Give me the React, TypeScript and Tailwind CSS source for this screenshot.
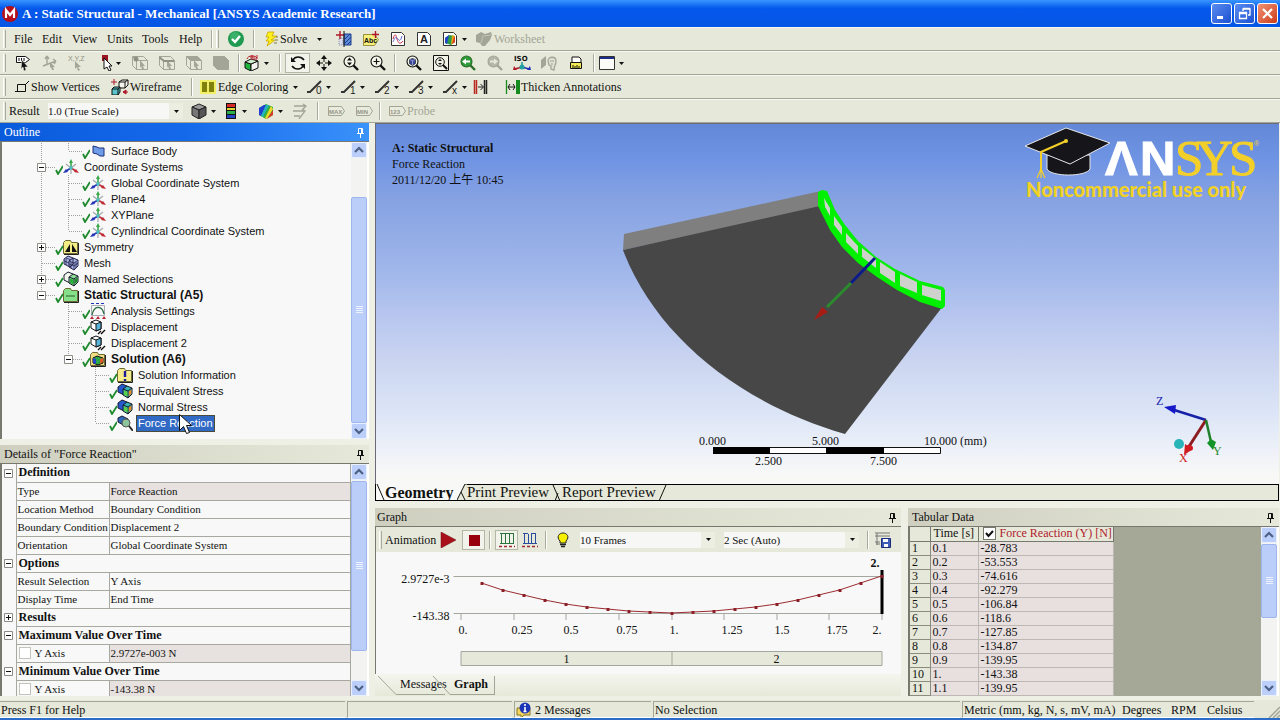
import React from 'react';
import clsx from 'clsx';

type Kids = { children?: React.ReactNode };

const Icon: React.FC<Kids & { w?: number; h?: number }> = ({ w = 16, h = 16, children }) => (
  <svg width={w} height={h} viewBox={`0 0 ${w} ${h}`} fill="none" className="shrink-0" aria-hidden="true">
    {children}
  </svg>
);

/* ---------- toolbar glyphs ---------- */

const CheckBall = () => (
  <Icon>
    <circle cx="8" cy="8" r="8" fill="#1f9a50" />
    <circle cx="7" cy="6" r="5" fill="#4fbf7c" opacity=".6" />
    <path d="M4 8l3 3 5-6" stroke="#fff" strokeWidth="2.4" />
  </Icon>
);
const Bolt = () => (
  <Icon w={14}>
    <path d="M3 1h6L7 5h5L6 9h4L2 15l2-5H1l3-4H1z" fill="#fff21c" stroke="#c9a500" strokeWidth=".8" />
    <path d="M9 12h3M10 9h3M11 6h2" stroke="#7c7a40" />
  </Icon>
);
const SectionPlane = () => (
  <Icon>
    <path d="M8 3h7v11H8z" fill="#5d8bd8" stroke="#1c3c8c" />
    <path d="M9 8l5-5M9 12l6-6M11 14l4-4" stroke="#1c3c8c" />
    <path d="M3 7h4v7H3z" fill="#d8dcea" stroke="#8890b0" strokeDasharray="1 1" />
    <path d="M0 4h8M4 0v8" stroke="#b01828" strokeWidth="1.4" />
    <path d="M8 0v16" stroke="#111" />
  </Icon>
);
const AbcNote = () => (
  <Icon>
    <path d="M.5 3.500h11l4 5-4 6H.5z" fill="#f6f07a" stroke="#98923c" />
    <text x="1" y="12" fontSize="7" fontWeight="bold" fontFamily="Liberation Sans, sans-serif" fill="#111">Abc</text>
    <path d="M12.500 0v7M9 3.500h7" stroke="#b01828" strokeWidth="1.4" />
  </Icon>
);
const ChartPage = () => (
  <Icon>
    <path d="M1.500 1.500h10l3 3v10h-13z" fill="#fff" stroke="#333" />
    <path d="M3 8c2-7 3-4 4 0s3 6 6 2" stroke="#cc3344" />
    <path d="M3 11c1-2 2-6 4-4s3 5 5-2" stroke="#5566cc" />
  </Icon>
);
const LetterPage = () => (
  <Icon>
    <path d="M1.500 1.500h10l3 3v10h-13z" fill="#fff" stroke="#333" />
    <text x="4" y="12" fontSize="11" fontWeight="bold" fontFamily="Liberation Sans, sans-serif" fill="#222">A</text>
  </Icon>
);
const ImagePage = () => (
  <Icon>
    <path d="M1.500 1.500h10l3 3v10h-13z" fill="#fff" stroke="#333" />
    <path d="M3 7l4-3 6 1v6l-4 3-6-2z" fill="#2a9c48" />
    <path d="M3 7l4-3-2 9-2-1z" fill="#2346c8" />
    <path d="M10 4l3 1v6l-4 3z" fill="#e3a51c" />
    <path d="M12 6l1 0v5l-3 2z" fill="#d8401c" />
  </Icon>
);
const Sheet = () => (
  <Icon>
    <path d="M0 4l5-3 4 2 6-2 1 3-2 5-5 6H6l-2-3-4-1z" fill="#a3a597" />
    <path d="M5 12l2-7 8-1" stroke="#c2c4b6" />
  </Icon>
);
const LabelPick = () => (
  <Icon>
    <path d="M1.500 1.500h9l4 3-4 3h-9z" fill="#fff" stroke="#111" />
    <path d="M4 3v3M6.500 3v3M9 3v3" stroke="#111" />
    <path d="M7 5l6 7-3 0 1 3-2 1-1-4-2 2z" fill="#111" stroke="#e6e9d9" strokeWidth=".5" />
  </Icon>
);
const DirPick = () => (
  <Icon>
    <path d="M1 11l13-5M5 1v8M5 1L3 4M5 1l2 3M14 6l-3-2M14 6l-2 3" stroke="#a3a597" strokeWidth="1.400" />
    <path d="M8 7l5 5-2 0 1 3-2 0-1-3-1 1z" fill="#a3a597" />
  </Icon>
);
const XyzPick = () => (
  <Icon w={18}>
    <text x="0" y="6" fontSize="7" fontFamily="Liberation Sans, sans-serif" fill="#8f9184">X,Y,Z</text>
    <path d="M7 6l6 6-3 0 2 3-2 1-1-4-2 2z" fill="#a3a597" />
  </Icon>
);
const PickArrow = () => (
  <Icon w={14}>
    <path d="M1 0h6v6H1z" fill="#9b1620" />
    <path d="M3 3l8 8H8l2 4-2 1-2-4-3 2z" fill="#fff" stroke="#111" />
  </Icon>
);
const CubePick: React.FC<{ kind: 'vertex' | 'edge' | 'face' | 'body' }> = ({ kind }) => (
  <Icon>
    <path d="M.5 1.500h11l4 4v9h-11l-4-4z" fill={kind === 'body' ? '#a3a597' : 'none'} stroke="#a3a597" />
    {kind !== 'body' && (
      <>
        <path d="M.5 1.500l4 4v9M4.500 5.500h11" stroke="#a3a597" />
        <path d="M8 5l5 6-2 0 1 3-2 0-1-3-1 2z" fill="#a3a597" />
      </>
    )}
    {kind === 'vertex' && <circle cx="4" cy="4" r="2.500" fill="#8f9184" />}
    {kind === 'edge' && <path d="M0 2l5 4h10" stroke="#8f9184" strokeWidth="2" />}
    {kind === 'face' && <path d="M.5 1.500h11l4 4h-11z" fill="#a3a597" />}
  </Icon>
);
const GreenCube = () => (
  <Icon>
    <path d="M1 7l6 2v7l-6-3z" fill="#1fb43c" stroke="#111" />
    <path d="M7 9l7-3v7l-7 3z" fill="#f4f4ee" stroke="#111" />
    <path d="M1 7l6-3 7 2-7 3z" fill="#cfeccc" stroke="#111" />
    <path d="M3 4c1-4 8-4 10-1M13 0v4H9M8 0v5M6 2h5" stroke="#b81c28" />
  </Icon>
);
const Rotate = () => (
  <Icon>
    <path d="M3 5c2-4 8-4 11 0M13 11c-2 4-8 4-11 0" stroke="#111" strokeWidth="1.600" />
    <path d="M1 2v5h5zM15 14V9h-5z" fill="#111" />
  </Icon>
);
const Pan = () => (
  <Icon>
    <path d="M8 2v12M2 8h12" stroke="#111" strokeDasharray="5 2" />
    <path d="M8 0l3 4H5zM8 16l3-4H5zM0 8l4-3v6zM16 8l-4-3v6z" fill="#111" />
  </Icon>
);
const Lens: React.FC<Kids & { fill?: string; stroke?: string }> = ({ fill = '#f4f6ea', stroke = '#111', children }) => (
  <Icon>
    <path d="M10 10l5 5" stroke={stroke} strokeWidth="2.400" />
    <circle cx="6.500" cy="6.500" r="5.500" fill={fill} stroke={stroke} strokeWidth="1.100" />
    {children}
  </Icon>
);
const ZoomUpDown = () => (
  <Lens>
    <path d="M6.500 2.500l2.500 3H4zM6.500 10.500l2.500-3H4z" fill="#111" />
  </Lens>
);
const ZoomPlus = () => (
  <Lens>
    <path d="M6.500 3.500v6M3.500 6.500h6" stroke="#111" strokeWidth="1.200" />
  </Lens>
);
const ZoomCube = () => (
  <Lens>
    <path d="M3.500 4.500l3-1 3 1v4l-3 2-3-2z" fill="#3b48a0" stroke="#111" strokeWidth=".6" />
    <path d="M3.500 4.500l3 1 3-1M6.500 6v4" stroke="#c7ccf0" strokeWidth=".6" />
  </Lens>
);
const ZoomBox = () => (
  <Icon>
    <path d="M.5.5h15v15H.5z" stroke="#111" fill="#f0f2e6" />
    <path d="M10 10l4 4" stroke="#111" strokeWidth="2" />
    <circle cx="7" cy="7" r="4.300" stroke="#111" />
    <path d="M7 4l2 2H5zM7 10l2-2H5z" fill="#111" />
  </Icon>
);
const ZoomBack = () => (
  <Lens fill="#2f9a38" stroke="#2a6c28">
    <path d="M2 6.500l4-3v2h4v2H6v2z" fill="#fff" />
  </Lens>
);
const ZoomForward = () => (
  <Lens fill="#b4b6a8" stroke="#a3a597">
    <path d="M11 6.500l-4-3v2H3v2h4v2z" fill="#e6e9d9" />
  </Lens>
);
const Iso = () => (
  <Icon w={18}>
    <text x="1" y="6" fontSize="7" fontWeight="bold" fontFamily="DejaVu Sans, sans-serif" fill="#111">ISO</text>
    <path d="M9 12V7" stroke="#1b9a9a" strokeWidth="1.500" />
    <path d="M9 12l-7 2" stroke="#b01828" strokeWidth="1.500" />
    <path d="M9 12l7 2" stroke="#1f2fb4" strokeWidth="1.500" />
    <path d="M0 15l1-4 3 4z" fill="#b01828" />
    <path d="M18 15l-1-4-3 4z" fill="#1f2fb4" />
    <circle cx="9" cy="12" r="2.500" fill="#22a0a0" />
  </Icon>
);
const LookAt = () => (
  <Icon>
    <path d="M0 5l5-4v9l-5 4z" fill="#a3a597" />
    <path d="M7 6c0-5 8-5 8 0s-2 4-2 9l-3-1 0-3-2-1z" fill="#dfe1d2" stroke="#a3a597" strokeWidth="1.300" />
    <path d="M9 6h4M11 8v2" stroke="#a3a597" />
  </Icon>
);
const Ruler = () => (
  <Icon>
    <path d="M4 7V2h7l2 2v3" fill="#fff" stroke="#111" />
    <path d="M2.500 7.500h11v6h-11z" fill="#f2ea54" stroke="#111" />
    <path d="M5 10v3M7 11v2M9 10v3M11 11v2" stroke="#111" />
  </Icon>
);
const WindowIcon = () => (
  <Icon>
    <path d="M.5 1.500h15v13H.5z" fill="#fbfcf8" stroke="#333" />
    <path d="M1 2h14v2H1z" fill="#1c2c8c" />
  </Icon>
);
const ShowVertices = () => (
  <Icon w={14}>
    <path d="M2.500 12.500v-7h8v7H0M10 6l4-4" stroke="#111" />
  </Icon>
);
const Wireframe = () => (
  <Icon w={18}>
    <path d="M8 3l3-2h6v5l-3 3H8z" fill="#f4f5ec" stroke="#111" />
    <path d="M8 3h6v6M14 3l3-2" stroke="#111" />
    <path d="M1 10l2-2h6v5l-2 3H1z" fill="#58c4cc" stroke="#111" />
    <path d="M1 10h6v6M7 10l2-2" stroke="#111" />
    <path d="M0 3h6M3 0v6M12 13h5M12 13l3-2v4z" stroke="#b01828" fill="#b01828" />
  </Icon>
);
const EdgeColor = () => (
  <Icon>
    <path d="M0 1h16v14H0z" fill="#f1ef66" />
    <path d="M2 3h5v10H2zM9 3h5v10H9z" fill="#80800c" />
  </Icon>
);
const EdgeWeight: React.FC<{ mark: string }> = ({ mark }) => (
  <Icon w={16}>
    <path d="M0 13h3L14 2" stroke="#333" strokeWidth="2" />
    <text x="9" y="15" fontSize="10" fontFamily="Liberation Sans, sans-serif" fill="#222">{mark}</text>
  </Icon>
);
const EdgeDirection = () => (
  <Icon>
    <path d="M1.500 1v14M3.500 1v14" stroke="#b82820" strokeWidth="1.500" />
    <path d="M11.500 1v14M13.500 1v14" stroke="#222" strokeWidth="1.500" />
    <path d="M5 8h5M7.500 5l3 3-3 3" stroke="#222" />
  </Icon>
);
const Thicken = () => (
  <Icon>
    <path d="M1.500 1v14" stroke="#178a20" strokeWidth="1.300" />
    <path d="M11 1h4v14h-4z" fill="#178a20" />
    <path d="M3 8h7M5 5L3 8l2 3M8 5l2 3-2 3" stroke="#111" />
  </Icon>
);
const GrayCube = () => (
  <Icon>
    <path d="M1 4l7-3 7 3-7 3z" fill="#9b9b9b" stroke="#222" />
    <path d="M1 4l7 3v9l-7-4z" fill="#777" stroke="#222" />
    <path d="M15 4L8 7v9l7-4z" fill="#555" stroke="#222" />
  </Icon>
);
const Legend = () => (
  <Icon w={12}>
    <path d="M1 0h10v16H1z" fill="#111" />
    <path d="M2 1h8v3H2z" fill="#d42a2a" />
    <path d="M2 5h8v2H2z" fill="#e4d43a" />
    <path d="M2 8h8v3H2z" fill="#2cae4c" />
    <path d="M2 12h8v3H2z" fill="#2444c4" />
  </Icon>
);
const RainbowCube = () => (
  <Icon>
    <path d="M1 5l7-4 7 3v8l-7 4-7-4z" fill="#2fae3e" />
    <path d="M1 5l5-3 2 0-5 11-2-1z" fill="#2340d4" />
    <path d="M8 2l-5 11 2 1 6-12z" fill="#23b4c8" />
    <path d="M13 3L7 15l2 1 6-10z" fill="#f0d82a" />
    <path d="M15 7l-6 9 6-4z" fill="#de3a20" />
  </Icon>
);
const Vectors = () => (
  <Icon>
    <path d="M2 3h12M1 8h12M2 13h6M11 1l3 2-3 3M10 6l3 2-6 8" stroke="#a3a597" strokeWidth="1.300" />
  </Icon>
);
const Tag: React.FC<{ text: string }> = ({ text }) => (
  <Icon w={17} h={12}>
    <path d="M.5 1.500h13l3 4.500-3 4.500H.5z" fill="#e9ebdd" stroke="#a3a597" />
    <text x="1" y="9" fontSize="6" fontWeight="bold" fontFamily="Liberation Sans, sans-serif" fill="#929487">{text}</text>
  </Icon>
);

/* ---------- tree glyphs ---------- */

const Axes = () => (
  <Icon>
    <path d="M8 9L8 3" stroke="#36a84a" strokeWidth="1.600" />
    <path d="M8 0l2 4H6z" fill="#36a84a" />
    <path d="M8 9l-5 3" stroke="#2233b8" strokeWidth="1.600" />
    <path d="M0 14l3-4 2 3z" fill="#2233b8" />
    <path d="M8 9l5 3" stroke="#c02c34" strokeWidth="1.600" />
    <path d="M16 14l-5-1 2-3z" fill="#c02c34" />
    <path d="M8 9L3 5M8 9l5-4M8 9v6" stroke="#a2a8ac" strokeWidth="1.200" />
    <circle cx="8" cy="9" r="1.800" fill="#4cc0c8" />
  </Icon>
);
const Folder: React.FC<Kids & { color: string }> = ({ color, children }) => (
  <Icon>
    <path d="M.5 3.500l2-2h5l1 2h6v11H.5z" fill={color} stroke="#6c6a34" />
    <path d="M1 15.500h14.500V4" stroke="#222" />
    {children}
  </Icon>
);
const Blocks: React.FC<{ a: string; b: string; c: string; d?: string }> = ({ a, b, c, d = c }) => (
  <Icon>
    <path d="M1 4l4-3 5 2v6l-3 3-6-3z" fill={a} stroke="#1a1a30" />
    <path d="M6 6l4-3 5 2v6l-4 4-5-3z" fill={b} stroke="#1a1a30" />
    <path d="M6 6l5 2v7M11 8l4-3" stroke="#1a1a30" />
    <path d="M7 7.500l3.500 1.300v4.700L7 12z" fill={c} />
    <path d="M11.800 8.500L14.300 6.500v4l-2.500 2.500z" fill={d} />
  </Icon>
);
const nodeIcons: Record<string, React.ReactNode> = {
  surface: (
    <Icon>
      <path d="M3 3l4 1 2 1 5 0v8l-4 0-3-2-4-1z" fill="#6f9ce8" stroke="#1e2f78" />
    </Icon>
  ),
  axes: <Axes />,
  symmetry: (
    <Folder color="#f4ec84">
      <path d="M7 5v8H2zM9 5v8h5z" fill="#111" />
    </Folder>
  ),
  mesh: (
    <Icon>
      <path d="M1 4l4-3 5 2v6l-3 3-6-3zM6 6l4-3 5 2v6l-4 4-5-3z" fill="#aab4e4" stroke="#23244c" />
      <path d="M6 6l5 2v7M11 8l4-3M3 3l5 2M3 4v6M8 7v6M6 9l5 2 4-3M1 6l5 2M13 7v6" stroke="#23244c" strokeWidth=".8" />
    </Icon>
  ),
  named: <Blocks a="#f2f5ee" b="#8fdc98" c="#28b03c" d="#188a2a" />,
  structural: (
    <Folder color="#86e08a">
      <path d="M3 9h9" stroke="#2a5a2c" />
    </Folder>
  ),
  settings: (
    <Icon>
      <path d="M1.500 2.500h13v10h-13z" stroke="#a7acb4" />
      <path d="M2 12C4 2 12 2 14 11" stroke="#26683c" strokeWidth="1.200" />
      <path d="M1 0h3M6 0h3M11 0h3" stroke="#2233b8" strokeWidth="2" />
      <path d="M2 13l2 3H0zM8 13l2 3H6zM14 13l2 3h-4z" fill="#b82430" />
    </Icon>
  ),
  displacement: (
    <Icon>
      <path d="M1 3l5-2 5 2v7l-5 2-5-3z" fill="#fff" stroke="#111" />
      <path d="M6 5l5-2v7l-5 2z" fill="#58b4d8" stroke="#111" />
      <path d="M1 3l5 2" stroke="#111" />
      <path d="M8 15l3-3M11 15l4-4" stroke="#111" strokeWidth="1.400" />
    </Icon>
  ),
  solution: (
    <Folder color="#f0dc84">
      <path d="M3 7l4-2 6 2v5l-5 2-5-2z" fill="#2ca848" stroke="#111" />
      <path d="M3 7l3 1v5l-3-1z" fill="#2346c8" />
      <path d="M10 8l3-1v4l-3 2z" fill="#de5a20" />
    </Folder>
  ),
  info: (
    <Folder color="#f6ec8c">
      <path d="M8 4v6M8 12v2" stroke="#1c1c9c" strokeWidth="2.400" />
    </Folder>
  ),
  stress: <Blocks a="#2458cc" b="#34b4b0" c="#58d048" d="#f08a24" />,
  probe: (
    <Icon>
      <path d="M1 3l4-2 6 3v4l-3 3-7-4z" fill="#2f66b8" stroke="#1a1a30" />
      <circle cx="9" cy="8" r="4" fill="#8cc49c" stroke="#555" />
      <path d="M12 11l4 5" stroke="#222" strokeWidth="1.800" />
    </Icon>
  ),
};

type Line = 'none' | 'full' | 'last';
interface TreeNode {
  label: string;
  icon: string;
  lines: Line[];
  toggle?: '+' | '-';
  bold?: boolean;
  selected?: boolean;
}

const tree: TreeNode[] = [
  { label: 'Surface Body', icon: 'surface', lines: ['full', 'last'] },
  { label: 'Coordinate Systems', icon: 'axes', lines: ['full'], toggle: '-' },
  { label: 'Global Coordinate System', icon: 'axes', lines: ['full', 'full'] },
  { label: 'Plane4', icon: 'axes', lines: ['full', 'full'] },
  { label: 'XYPlane', icon: 'axes', lines: ['full', 'full'] },
  { label: 'Cynlindrical Coordinate System', icon: 'axes', lines: ['full', 'last'] },
  { label: 'Symmetry', icon: 'symmetry', lines: ['full'], toggle: '+' },
  { label: 'Mesh', icon: 'mesh', lines: ['full'] },
  { label: 'Named Selections', icon: 'named', lines: ['full'], toggle: '+' },
  { label: 'Static Structural (A5)', icon: 'structural', lines: ['last'], toggle: '-', bold: true },
  { label: 'Analysis Settings', icon: 'settings', lines: ['none', 'full'] },
  { label: 'Displacement', icon: 'displacement', lines: ['none', 'full'] },
  { label: 'Displacement 2', icon: 'displacement', lines: ['none', 'full'] },
  { label: 'Solution (A6)', icon: 'solution', lines: ['none', 'last'], toggle: '-', bold: true },
  { label: 'Solution Information', icon: 'info', lines: ['none', 'none', 'full'] },
  { label: 'Equivalent Stress', icon: 'stress', lines: ['none', 'none', 'full'] },
  { label: 'Normal Stress', icon: 'stress', lines: ['none', 'none', 'full'] },
  { label: 'Force Reaction', icon: 'probe', lines: ['none', 'none', 'last'], selected: true },
];

const TreeGuide: React.FC<{ line: Line; own: boolean; toggle?: '+' | '-' }> = ({ line, own, toggle }) => (
  <Icon w={27}>
    {line !== 'none' && (
      <path d={line === 'full' ? 'M13.5 0v16' : 'M13.5 0v8'} stroke="#a0a0a0" strokeDasharray="1 1" />
    )}
    {own && <path d="M14 8.5h13" stroke="#a0a0a0" strokeDasharray="1 1" />}
    {toggle && (
      <>
        <path d="M9.5 4.5h8v8h-8z" fill="#fff" stroke="#8c8c84" />
        <path d={toggle === '+' ? 'M11 8.5h5M13.5 6v5' : 'M11 8.5h5'} stroke="#111" />
      </>
    )}
  </Icon>
);

const TreeRow: React.FC<{ node: TreeNode }> = ({ node }) => (
  <li className="flex h-4 items-center">
    {node.lines.map((line, i) => {
      const own = i === node.lines.length - 1;
      return <TreeGuide key={i} line={line} own={own} toggle={own ? node.toggle : undefined} />;
    })}
    <Icon w={8}>
      <path d="M1 11l2 4 5-8" stroke="#1d8a2c" strokeWidth="1.800" />
    </Icon>
    {nodeIcons[node.icon]}
    <span
      className={clsx(
        'ml-1 whitespace-nowrap px-px leading-[15px]',
        node.bold && 'text-[12px] font-bold',
        node.selected && 'bg-[#316ac5] text-white outline outline-1 outline-[#4a4a3a]',
      )}
    >
      {node.label}
    </span>
  </li>
);

/* ---------- shared chrome ---------- */

const Pin: React.FC<{ light?: boolean }> = ({ light }) => (
  <button type="button" aria-label="Pin panel" className="flex">
    <Icon w={9} h={11}>
      <path d="M2.500 6V1.500h4V6M1 6.500h7M4.500 7v4M5.500 2v4" stroke={light ? '#fff' : '#111'} />
    </Icon>
  </button>
);

const PanelTitle: React.FC<Kids & { active?: boolean; className?: string }> = ({ active, className = 'pl-1', children }) => (
  <header
    className={clsx(
      'flex h-[18px] shrink-0 items-center justify-between pr-1',
      className,
      active
        ? 'bg-linear-to-r from-[#0a5bdc] via-[#1469ea] to-[#3a92fb] text-white'
        : 'bg-linear-to-r from-[#cfcfc0] to-[#e6e9d9]',
    )}
  >
    <h2>{children}</h2>
    <Pin light={active} />
  </header>
);

const ScrollButton: React.FC<{ dir: 'up' | 'down' }> = ({ dir }) => (
  <button
    type="button"
    aria-label={`Scroll ${dir}`}
    className="flex h-4 shrink-0 items-center justify-center rounded-[2px] border border-[#e9f0ff] bg-[#bccffb]"
  >
    <Icon w={10} h={8}>
      <path d={dir === 'up' ? 'M1 6l4-4 4 4' : 'M1 2l4 4 4-4'} stroke="#4d6185" strokeWidth="2.200" />
    </Icon>
  </button>
);

const ScrollBar: React.FC<{ before: string; thumb: string }> = ({ before, thumb }) => (
  <div className="flex w-4 shrink-0 flex-col bg-[#f3f3f2]">
    <ScrollButton dir="up" />
    <div className="flex min-h-0 flex-1 flex-col">
      <div className={before} />
      <div className={clsx('flex items-center justify-center rounded-[2px] border border-[#9db7ee] bg-[#bbcdf9]', thumb)}>
        <Icon w={7} h={8}>
          <path d="M0 .5h7M0 2.500h7M0 4.500h7M0 6.500h7" stroke="#eef3ff" />
        </Icon>
      </div>
    </div>
    <ScrollButton dir="down" />
  </div>
);

const Grip = () => <span className="mx-[3px] h-[18px] w-[3px] shrink-0 border-r border-[#a8aa9c] border-l border-l-white" />;
const Sep: React.FC<{ className?: string }> = ({ className }) => (
  <span className={clsx('h-[18px] w-[2px] shrink-0 border-l border-[#a8aa9c] border-r border-r-white', className)} />
);
const Caret = () => (
  <Icon w={5} h={3}>
    <path d="M0 0h5L2.500 3z" fill="#111" />
  </Icon>
);

const ToolButton: React.FC<Kids & { name: string; className?: string; disabled?: boolean }> = ({
  name,
  className = 'w-[27px] justify-center',
  disabled,
  children,
}) => (
  <button
    type="button"
    aria-label={name}
    disabled={disabled}
    className={clsx('flex h-5 shrink-0 items-center whitespace-nowrap', disabled && 'text-[#a3a597]', className)}
  >
    {children}
  </button>
);

const ToolRow: React.FC<Kids> = ({ children }) => (
  <div className="flex h-6 shrink-0 items-center overflow-hidden border-t border-[#f8f9f2] border-b border-b-[#a3a597]">
    {children}
  </div>
);

const Combo: React.FC<{ label: string; value: string; className: string }> = ({ label, value, className }) => (
  <div className={clsx('relative flex shrink-0 items-center', className)}>
    <select aria-label={label} className="h-4 w-full appearance-none bg-[#f7f8f6] text-[11px] leading-4 outline-none">
      <option>{value}</option>
    </select>
    <span className="pointer-events-none absolute right-0 flex h-4 w-[14px] items-center justify-center bg-[#eceee2]">
      <Caret />
    </span>
  </div>
);

/* ---------- title bar and toolbars ---------- */

const TitleBar = () => (
  <header className="flex h-[27px] shrink-0 items-center bg-linear-to-b from-[#3a95ff] via-[#0458ec] via-30% to-[#0556e4] pl-[2px] pr-[2px] text-white">
    <Icon>
      <circle cx="8" cy="8" r="8" fill="#b50f1c" />
      <path d="M4 12V4l4 5 4-5v8" stroke="#fff" strokeWidth="2.200" />
    </Icon>
    <h1 className="ml-1 flex-1 text-[13px] font-bold">A : Static Structural - Mechanical [ANSYS Academic Research]</h1>
    <div className="flex gap-[2px]">
      <button type="button" aria-label="Minimize" className="flex h-[21px] w-[21px] items-center justify-center rounded-[3px] border border-white bg-linear-to-br from-[#5b8cf0] to-[#1b4fd0]">
        <Icon w={13} h={13}><path d="M2 9h6v3H2z" fill="#fff" /></Icon>
      </button>
      <button type="button" aria-label="Restore" className="flex h-[21px] w-[21px] items-center justify-center rounded-[3px] border border-white bg-linear-to-br from-[#5b8cf0] to-[#1b4fd0]">
        <Icon w={13} h={13}><path d="M5 4V2h7v6h-2M1.500 5.500h7v6h-7zM1 6.500h8M5 1.500h7" stroke="#fff" strokeWidth="1.300" /></Icon>
      </button>
      <button type="button" aria-label="Close" className="flex h-[21px] w-[21px] items-center justify-center rounded-[3px] border border-white bg-linear-to-br from-[#f09070] to-[#cc3a14]">
        <Icon w={13} h={13}><path d="M2 2l9 9M11 2l-9 9" stroke="#fff" strokeWidth="2.200" /></Icon>
      </button>
    </div>
  </header>
);

const menus = [
  { label: 'File', width: 'w-7' },
  { label: 'Edit', width: 'w-[30px]' },
  { label: 'View', width: 'w-[35px]' },
  { label: 'Units', width: 'w-[35px]' },
  { label: 'Tools', width: 'w-[37px]' },
  { label: 'Help', width: 'w-8' },
];

const Toolbars = () => (
  <div className="flex shrink-0 flex-col bg-[#e6e9d9]">
    <ToolRow>
      <Grip />
      <nav className="ml-[5px] flex">
        {menus.map((m) => (
          <button key={m.label} type="button" className={clsx('text-left', m.width)}>{m.label}</button>
        ))}
      </nav>
      <Sep />
      <Grip />
      <ToolButton name="Status"><CheckBall /></ToolButton>
      <Sep className="ml-[4px]" />
      <ToolButton name="Solve" className="ml-[10px] w-[52px] gap-px"><Bolt />Solve</ToolButton>
      <Caret />
      <span className="w-2" />
      <ToolButton name="Section plane"><SectionPlane /></ToolButton>
      <ToolButton name="Annotation"><AbcNote /></ToolButton>
      <ToolButton name="Chart"><ChartPage /></ToolButton>
      <ToolButton name="Comment" className="w-[25px] justify-center"><LetterPage /></ToolButton>
      <ToolButton name="Image" className="ml-[6px] w-[34px] gap-[4px]"><ImagePage /><Caret /></ToolButton>
      <ToolButton name="Worksheet" className="w-20 gap-[2px]" disabled><Sheet />Worksheet</ToolButton>
    </ToolRow>
    <ToolRow>
      <Grip />
      <ToolButton name="Label"><LabelPick /></ToolButton>
      <ToolButton name="Direction" disabled><DirPick /></ToolButton>
      <ToolButton name="Coordinates" disabled><XyzPick /></ToolButton>
      <ToolButton name="Select mode" className="ml-[11px] w-[25px] gap-px"><PickArrow /><Caret /></ToolButton>
      <ToolButton name="Vertex" disabled><CubePick kind="vertex" /></ToolButton>
      <ToolButton name="Edge" disabled><CubePick kind="edge" /></ToolButton>
      <ToolButton name="Face" disabled><CubePick kind="face" /></ToolButton>
      <ToolButton name="Body" disabled><CubePick kind="body" /></ToolButton>
      <Sep className="mx-1" />
      <ToolButton name="Extend selection" className="w-[31px] gap-1"><GreenCube /><Caret /></ToolButton>
      <Sep className="mx-1" />
      <ToolButton name="Rotate" className="w-[25px] justify-center border border-[#b4b6a8] bg-[#f2f3ea]"><Rotate /></ToolButton>
      <ToolButton name="Pan"><Pan /></ToolButton>
      <ToolButton name="Zoom"><ZoomUpDown /></ToolButton>
      <ToolButton name="Box zoom"><ZoomPlus /></ToolButton>
      <Sep className="ml-[3px] mr-1" />
      <ToolButton name="Zoom to fit"><ZoomCube /></ToolButton>
      <ToolButton name="Magnifier"><ZoomBox /></ToolButton>
      <ToolButton name="Previous view"><ZoomBack /></ToolButton>
      <ToolButton name="Next view" disabled><ZoomForward /></ToolButton>
      <ToolButton name="Isometric"><Iso /></ToolButton>
      <ToolButton name="Look at" disabled><LookAt /></ToolButton>
      <ToolButton name="Rescale"><Ruler /></ToolButton>
      <Sep className="mx-1" />
      <ToolButton name="Viewports" className="w-[30px] gap-1"><WindowIcon /><Caret /></ToolButton>
    </ToolRow>
    <ToolRow>
      <Grip />
      <ToolButton name="Show Vertices" className="ml-[6px] w-24 gap-[2px]"><ShowVertices />Show Vertices</ToolButton>
      <ToolButton name="Wireframe" className="w-20 gap-px"><Wireframe />Wireframe</ToolButton>
      <Sep />
      <ToolButton name="Edge Coloring" className="ml-[7px] w-[103px] gap-[2px]"><EdgeColor />Edge Coloring<span className="w-px" /><Caret /></ToolButton>
      {['0', '1', '2', '3', 'x'].map((m) => (
        <ToolButton key={m} name={`Edge thickness ${m}`} className="ml-1 w-[30px] gap-[3px]"><EdgeWeight mark={m} /><Caret /></ToolButton>
      ))}
      <ToolButton name="Edge direction" className="w-[22px]"><EdgeDirection /></ToolButton>
      <ToolButton name="Thicken Annotations" className="ml-[10px] w-[118px]"><Thicken />Thicken Annotations</ToolButton>
    </ToolRow>
    <ToolRow>
      <Grip />
      <span className="w-[39px] shrink-0">Result</span>
      <Combo label="Result scale" value="1.0 (True Scale)" className="w-[135px]" />
      <ToolButton name="Geometry display" className="ml-2 w-[34px] gap-[4px]"><GrayCube /><Caret /></ToolButton>
      <ToolButton name="Contours" className="w-[33px] gap-[5px]"><Legend /><Caret /></ToolButton>
      <ToolButton name="Edges display" className="w-[34px] gap-[4px]"><RainbowCube /><Caret /></ToolButton>
      <ToolButton name="Vectors" className="w-[25px]" disabled><Vectors /></ToolButton>
      <Sep className="mr-1" />
      <ToolButton name="Maximum" disabled><Tag text="MAX" /></ToolButton>
      <ToolButton name="Minimum" className="w-[29px] justify-center" disabled><Tag text="MIN" /></ToolButton>
      <Sep className="mr-2" />
      <ToolButton name="Probe" className="w-12 gap-px" disabled><Tag text="123" />Probe</ToolButton>
    </ToolRow>
  </div>
);

/* ---------- left side ---------- */

const Outline = () => (
  <section className="flex min-h-0 flex-1 flex-col">
    <PanelTitle active>Outline</PanelTitle>
    <div className="flex min-h-0 flex-1 border-l-2 border-t border-[#77786e] bg-[#f7f8f7]">
      <div className="relative min-h-0 min-w-0 flex-1 overflow-hidden">
        <ul className="pl-[26px] pt-px font-['Liberation_Sans',sans-serif] text-[11px]">
          {tree.map((n) => (
            <TreeRow key={n.label} node={n} />
          ))}
        </ul>
        <div className="pointer-events-none absolute left-[176px] top-[271px]">
          <Icon w={14} h={22}>
            <path d="M1.500 1.500v16l4-4 3 7 3-1-3-7h5z" fill="#fff" stroke="#111" />
          </Icon>
        </div>
      </div>
      <ScrollBar before="h-[39px]" thumb="flex-1" />
      <div className="w-[2px] bg-white" />
    </div>
  </section>
);

type Detail = { group: string; open: boolean } | { name: string; value: string; readOnly?: boolean; tick?: string };

const details: Detail[] = [
  { group: 'Definition', open: true },
  { name: 'Type', value: 'Force Reaction', readOnly: true },
  { name: 'Location Method', value: 'Boundary Condition' },
  { name: 'Boundary Condition', value: 'Displacement 2' },
  { name: 'Orientation', value: 'Global Coordinate System' },
  { group: 'Options', open: true },
  { name: 'Result Selection', value: 'Y Axis' },
  { name: 'Display Time', value: 'End Time' },
  { group: 'Results', open: false },
  { group: 'Maximum Value Over Time', open: true },
  { name: 'Y Axis', value: '2.9727e-003 N', readOnly: true, tick: 'max-y' },
  { group: 'Minimum Value Over Time', open: true },
  { name: 'Y Axis', value: '-143.38 N', readOnly: true, tick: 'min-y' },
];

const Details = () => (
  <section className="flex h-[251px] shrink-0 flex-col">
    <PanelTitle>Details of "Force Reaction"</PanelTitle>
    <div className="flex min-h-0 flex-1 border-l-2 border-t border-[#77786e] bg-[#f7f8f7]">
      <div className="min-w-0 flex-1 overflow-hidden">
        <table className="w-full table-fixed border-collapse text-[11px] leading-[17px]">
          <colgroup>
            <col className="w-[14px]" />
            <col className="w-[93px]" />
            <col />
          </colgroup>
          <tbody>
            {details.map((d, i) =>
              'group' in d ? (
                <tr key={i} className="h-[18px]">
                  <td className="p-0">
                    <button type="button" aria-label={`Toggle ${d.group}`} className="ml-[2px] flex">
                      <Icon w={9} h={9}>
                        <path d="M.5.5h8v8h-8z" fill="#fff" stroke="#8c8c84" />
                        <path d={d.open ? 'M2 4.500h5' : 'M2 4.500h5M4.500 2v5'} stroke="#111" />
                      </Icon>
                    </button>
                  </td>
                  <th colSpan={2} className="border border-t-0 border-[#a7a8a0] p-0 pl-[2px] text-left text-[12px] font-bold">
                    {d.group}
                  </th>
                </tr>
              ) : (
                <tr key={i} className="h-[18px]">
                  <td className="p-0" />
                  <td className="whitespace-nowrap border border-[#a7a8a0] p-0 pl-px">
                    {d.tick ? (
                      <label htmlFor={d.tick} className="flex items-center gap-1 pl-px">
                        <input id={d.tick} type="checkbox" className="h-3 w-3 appearance-none border border-[#c4c4bc] bg-white" />
                        {d.name}
                      </label>
                    ) : (
                      d.name
                    )}
                  </td>
                  <td className={clsx('border border-[#a7a8a0] p-0 pl-px', d.readOnly && 'bg-[#e7e1df]')}>{d.value}</td>
                </tr>
              ),
            )}
          </tbody>
        </table>
      </div>
      <ScrollBar before="h-px" thumb="h-[170px]" />
      <div className="w-[2px] bg-white" />
    </div>
  </section>
);

/* ---------- 3D view ---------- */

const facets = [
  '824,198 830,208 830,216 825,207',
  '834,216 842,227 842,235 834,225',
  '846,233 858,246 858,254 846,242',
  '862,248 876,259 876,268 862,257',
  '880,262 895,272 895,283 880,273',
  '900,274 917,282 917,293 900,286',
  '922,285 941,290 941,301 922,295',
];

const Logo = () => (
  <g>
    <path d="M1047 155v14c4 8 39 8 43 0v-14z" fill="#16161a" stroke="#e8e8e8" />
    <path d="M1025 146l41-18 44 15-40 21z" fill="#16161a" stroke="#e8e8e8" />
    <path d="M1066 141l-25 11v18" stroke="#f3cf2a" strokeWidth="2" fill="none" />
    <path d="M1041 169l-4 9M1041 169v9M1041 169l4 9" stroke="#f3cf2a" strokeWidth="1.200" />
    <circle cx="1066" cy="141" r="2" fill="#f3cf2a" />
    <text x="1105 1140" y="175" fontFamily="Liberation Sans, sans-serif" fontWeight="bold" fontSize="49" fill="#fff" stroke="#fff">ΛN</text>
    <text x="1175 1196 1229" y="175" fontFamily="Liberation Serif, serif" fontSize="51" fill="#f3cf2a" stroke="#f3cf2a">SYS</text>
    <text x="1254" y="146" fontSize="7" fontFamily="Liberation Sans, sans-serif" fill="#f3cf2a">®</text>
    <text x="1026" y="197" fontSize="20" fontWeight="900" fontFamily="Lato, sans-serif" fill="#f1d224">Noncommercial use only</text>
  </g>
);

const View3D = () => (
  <div className="relative min-h-0 flex-1 border-l border-t border-[#6a6b78] bg-[linear-gradient(180deg,#6488d8_0%,#7094e4_10%,#86a2e2_21%,#9fb6ea_40%,#bac8f0_55%,#ccd6f0_67%,#dde6f7_81%,#eef1f8_91%,#f8f9f7_98%)]">
    <svg viewBox="376 124 903 360" className="absolute inset-0 h-full w-full" fill="none" role="img" aria-label="ANSYS model view">
      <path d="M624 234L821 191 822 207 623 250z" fill="#7f7f7f" />
      <path d="M623 250L820 206C834 232 880 280 943 306L845 434C740 404 655 335 623 250z" fill="#474747" />
      <path
        d="M818 192l4-2 5 1 8 19 10 15 13 16 18 16 19 12 25 12 23 6 2 3v16l-3 3-22-7-23-12-20-13-19-14-16-16-12-17-12-24z"
        fill="#00f000"
      />
      {facets.map((p) => (
        <polygon key={p} points={p} fill="#cfd2cc" />
      ))}
      <path d="M875 258l-24 25" stroke="#0c1c8c" strokeWidth="3" />
      <path d="M851 283l-24 24" stroke="#2a8c2c" strokeWidth="3" />
      <path d="M814 320l8-13 6 5z" fill="#a81c14" />

      <path d="M713.500 447.500h227v6h-227z" fill="#fff" stroke="#111" />
      <path d="M713 447h57v7h-57zM826 447h58v7h-58z" fill="#000" />
      <g fontSize="12" fill="#111" fontFamily="Liberation Serif, serif">
        <text x="699" y="445">0.000</text>
        <text x="812" y="445">5.000</text>
        <text x="924" y="445">10.000 (mm)</text>
        <text x="755" y="465">2.500</text>
        <text x="870" y="465">7.500</text>
      </g>

      <path d="M1206 420l-35-11" stroke="#1620a8" strokeWidth="2.500" />
      <path d="M1164 407l12-2-1 9z" fill="#1418c8" />
      <path d="M1206 420l-18 28" stroke="#8c1c20" strokeWidth="3" />
      <path d="M1184 455l1-11 8 5z" fill="#d01c20" />
      <ellipse cx="1189" cy="448" rx="4" ry="3" fill="#d01c20" />
      <path d="M1206 420l5 22" stroke="#20802c" strokeWidth="2.500" />
      <path d="M1213 450l-6-7 4-4 5 3z" fill="#129428" />
      <circle cx="1179" cy="444" r="5" fill="#28b4b8" />
      <g fontSize="12" fontFamily="Liberation Serif, serif">
        <text x="1156" y="405" fill="#1820b0">Z</text>
        <text x="1179" y="462" fill="#d01c20">X</text>
        <text x="1213" y="455" fill="#1f8a2c">Y</text>
      </g>
      <Logo />
    </svg>
    <div className="relative pl-4 pt-4 leading-4">
      <p className="font-bold">A: Static Structural</p>
      <p>Force Reaction</p>
      <p>2011/12/20 上午 10:45</p>
    </div>
  </div>
);

/* the active tab is open towards the view above it */
const ViewTabs = () => (
  <div className="flex h-[17px] shrink-0 overflow-hidden border-x border-b border-black bg-[#e6e9d9] text-[15px] leading-[15px]">
    <div className="flex items-center bg-[#f8f9f7]">
      <Icon w={9}><path d="M1 0l7 16" stroke="#111" /></Icon>
      <button type="button" className="w-[72px] text-left text-[16px] font-bold">Geometry</button>
    </div>
    <Icon w={10}>
      <path d="M0 0h8L0 16z" fill="#f8f9f7" />
      <path d="M0 16L8 0h2M4 8l4 8" stroke="#111" />
    </Icon>
    <div className="flex flex-1 items-center border-t border-black">
      <button type="button" className="w-[85px] text-left">Print Preview</button>
      <Icon w={10}><path d="M1 0l7 16M3 16l3-8" stroke="#111" /></Icon>
      <button type="button" className="w-[96px] text-left">Report Preview</button>
      <Icon w={10}><path d="M1 16L8 0" stroke="#111" /></Icon>
    </div>
  </div>
);

/* ---------- graph ---------- */

const samples = [28.783, 53.553, 74.616, 92.279, 106.84, 118.6, 127.85, 134.87, 139.95, 143.38];
const curve = [...samples, ...samples.slice(0, 9).reverse(), 0];
const px = (t: number) => 84 + (421 * t) / 2;
const py = (v: number) => 24 + (37 * v) / 143.38;
const points = curve.map((v, i) => [Math.round(px((i + 1) / 10)), Math.round(py(v))]);
const ticks = ['0.', '0.25', '0.5', '0.75', '1.', '1.25', '1.5', '1.75'];

const Plot = () => (
  <svg viewBox="0 0 524 122" className="min-h-0 w-full flex-1" fill="none" role="img" aria-label="Force reaction over time">
    <path d="M77 24.500h429M77 61.500h429" stroke="#a4a6a0" />
    {ticks.map((t, i) => (
      <path key={t} d={`M${Math.round(px(i / 4))}.5 61v7`} stroke="#a4a6a0" />
    ))}
    <path d="M505.500 61v7" stroke="#a4a6a0" />
    <g fontSize="12" fill="#111" fontFamily="Liberation Serif, serif">
      <text x="73" y="31" textAnchor="end">2.9727e-3</text>
      <text x="73" y="68" textAnchor="end">-143.38</text>
      {ticks.map((t, i) => (
        <text key={t} x={Math.round(px(i / 4)) - 2} y="82">{t}</text>
      ))}
      <text x="496" y="82">2.</text>
      <text x="494" y="15" fontWeight="bold">2.</text>
    </g>
    <path d="M505.500 18v44" stroke="#000" strokeWidth="3" />
    <polyline points={points.map((p) => p.join(',')).join(' ')} stroke="#9c2c30" />
    {points.map(([x, y]) => (
      <rect key={x} x={x - 1} y={y - 1} width="3" height="3" fill="#8c2028" />
    ))}
    <path d="M84.500 99.500h421v14h-421zM295.500 99v14" fill="#e6e9d9" stroke="#a4a6a0" />
    <g fontSize="12" fill="#111" fontFamily="Liberation Serif, serif">
      <text x="187" y="111">1</text>
      <text x="397" y="111">2</text>
    </g>
  </svg>
);

const FrameGlyph: React.FC<{ color: string; even?: boolean }> = ({ color, even }) => (
  <Icon>
    <path d={even ? 'M1 1.500h5M2.500 2v9M6.500 2v9M9.500 2v9M13.500 2v9M9 1.500h5M1 11.500h14' : 'M1 1.500h14M2.500 2v9M6.500 2v9M10.500 2v9M14.500 2v9M1 11.500h14'} stroke={color} />
    <path d="M0 14.500h3M5 14.500h3M10 14.500h3M15 14.500h1" stroke="#a02830" strokeWidth="1.500" />
  </Icon>
);

const GraphPanel = () => (
  <section className="flex min-w-0 flex-1 flex-col">
    <PanelTitle className="pl-[2px]">Graph</PanelTitle>
    <div className="flex min-h-0 flex-1 flex-col border-l border-t border-[#77786e] bg-[#f7f8f7]">
      <div className="flex h-[25px] shrink-0 items-center overflow-hidden bg-[#e6e9d9]">
        <Grip />
        <span className="w-[55px] shrink-0">Animation</span>
        <ToolButton name="Play" className="w-[22px]"><Icon><path d="M1 0l15 8-15 8z" fill="#a8101c" stroke="#700810" strokeWidth=".5" /></Icon></ToolButton>
        <ToolButton name="Stop" className="w-[23px] justify-center border border-[#b4b6a8] bg-[#f2f3ea]"><Icon w={12} h={12}><path d="M1 1h11v11H1z" fill="#98000c" /></Icon></ToolButton>
        <Sep className="ml-1 mr-[4px]" />
        <ToolButton name="Distributed" className="w-[23px] justify-center border border-[#b4b6a8] bg-[#f2f3ea]"><FrameGlyph color="#2c7440" /></ToolButton>
        <ToolButton name="Result sets" className="w-[23px] justify-center"><FrameGlyph color="#2a4c9c" even /></ToolButton>
        <Sep className="ml-1 mr-[6px]" />
        <ToolButton name="Update contour" className="w-[27px] pl-1">
          <Icon w={12}>
            <path d="M3 9C-1 5 2 1 6 1s7 4 3 8v2H3z" fill="#f6f000" stroke="#222" />
            <path d="M3 12.500h6M4 14.500h4" stroke="#222" strokeWidth="1.500" />
          </Icon>
        </ToolButton>
        <Combo label="Frames" value="10 Frames" className="w-[135px]" />
        <Combo label="Duration" value="2 Sec (Auto)" className="ml-[9px] w-[135px]" />
        <Sep className="ml-2 mr-[6px]" />
        <ToolButton name="Export video" className="w-5">
          <Icon>
            <path d="M0 1h15M0 4h15M2 1v12M0 10h5M1 12h4" stroke="#777" />
            <path d="M6.500 6.500h9v9h-9z" fill="#3c5cb8" stroke="#1c2c78" />
            <path d="M8 7h5v3H8zM9 12h4v3H9z" fill="#fff" />
          </Icon>
        </ToolButton>
      </div>
      <Plot />
    </div>
    <div className="flex h-[22px] shrink-0 items-start bg-linear-to-b from-[#f4f5ee] to-[#e6e9d9] pl-[3px] pt-[2px]">
      <button type="button" className="flex">
        <Icon w={21} h={19}><path d="M0 0l18 18.500h3" stroke="#a3a597" /></Icon>
        <span className="h-[19px] w-[46px] border-b border-[#a3a597] pl-px text-left">Messages</span>
      </button>
      <button type="button" className="-ml-[13px] flex font-bold">
        <Icon w={21} h={19}><path d="M1 0l17 18.500h3" stroke="#a3a597" /></Icon>
        <span className="h-[19px] border-b border-r border-[#a3a597] pl-px pr-[6px]">Graph</span>
      </button>
    </div>
  </section>
);

/* ---------- tabular data ---------- */

const rows = [...samples, 139.95].map((v, i) => ({
  time: i === 9 ? '1.' : String((i + 1) / 10),
  force: `-${v}`,
}));

const TabularPanel = () => (
  <section className="flex w-[371px] shrink-0 flex-col">
    <PanelTitle>Tabular Data</PanelTitle>
    <div className="flex min-h-0 flex-1 overflow-hidden border-l-2 border-t border-[#77786e] bg-[#a5a896]">
      <div className="min-w-0 flex-1 overflow-hidden">
        <table className="w-[204px] table-fixed border-collapse bg-[#e8e0df] leading-[13px]">
          <colgroup>
            <col className="w-5" />
            <col className="w-12" />
            <col />
          </colgroup>
          <thead>
            <tr className="h-[14px] bg-[#e6e9d9]">
              <th className="border-b border-r border-[#77786e] p-0" />
              <th className="whitespace-nowrap border-b border-r border-[#77786e] p-0 pl-[3px] text-left font-normal">Time [s]</th>
              <th className="border-b border-r border-[#77786e] p-0 pl-1 text-left font-normal text-[#b0202c]">
                <label htmlFor="force-y" className="flex h-[13px] items-center gap-1 whitespace-nowrap">
                  <span className="relative flex">
                    <input id="force-y" type="checkbox" defaultChecked className="h-[13px] w-[13px] appearance-none border border-[#77786e] bg-white" />
                    <svg viewBox="0 0 13 13" className="pointer-events-none absolute inset-0 h-[13px] w-[13px]" fill="none">
                      <path d="M3 6l2.500 3L10 4" stroke="#111" strokeWidth="2" />
                    </svg>
                  </span>
                  Force Reaction (Y) [N]
                </label>
              </th>
            </tr>
          </thead>
          <tbody>
            {rows.map((r, i) => (
              <tr key={i} className="h-[14px]">
                <th className="border-b border-r border-[#8b8c80] bg-[#e6e9d9] p-0 pl-[2px] text-left font-normal">{i + 1}</th>
                <td className="border border-[#bdb8b4] p-0 pl-[2px]">{r.time}</td>
                <td className="border border-[#bdb8b4] p-0 pl-[2px]">{r.force}</td>
              </tr>
            ))}
          </tbody>
        </table>
      </div>
      <ScrollBar before="h-px" thumb="h-[74px]" />
      <div className="w-[2px] bg-white" />
    </div>
  </section>
);

/* ---------- status bar ---------- */

const cell = 'flex h-[17px] items-center overflow-hidden whitespace-nowrap border-l border-t border-[#a3a597] border-b border-b-white pl-px';

const StatusBar = () => (
  <footer className="flex h-5 shrink-0 items-start gap-[2px] border-b-2 border-[#2c6cc8] bg-[#e6e9d9] pt-px">
    <div className={clsx(cell, 'w-[345px] border-l-0')}>Press F1 for Help</div>
    <div className={clsx(cell, 'w-[165px]')} />
    <div className={clsx(cell, 'w-[137px] gap-[3px]')}>
      <Icon>
        <path d="M1 6h13v7H8l-3 3v-3H1z" fill="#f4d85c" stroke="#8c7420" />
        <circle cx="9" cy="6" r="5.500" fill="#1c34b8" />
        <path d="M9 2v2M9 5v5M7.500 9.500h3" stroke="#fff" strokeWidth="1.600" />
      </Icon>
      2 Messages
    </div>
    <div className={clsx(cell, 'min-w-0 flex-1')}>No Selection</div>
    <div className={clsx(cell, 'w-[292px]')}>
      <span className="w-[158px]">Metric (mm, kg, N, s, mV, mA)</span>
      <span className="w-[49px]">Degrees</span>
      <span className="w-9">RPM</span>
      <span>Celsius</span>
    </div>
    <div className="flex h-[17px] w-6 items-end justify-end">
      <Icon w={12} h={12}><path d="M1 12L12 1M5 12l7-7M9 12l3-3" stroke="#a3a597" strokeWidth="1.500" /></Icon>
    </div>
  </footer>
);

export default function App() {
  return (
    <div className="flex h-screen flex-col overflow-hidden bg-[#eef0e6] font-['Liberation_Serif','Noto_Sans_CJK_TC',serif] text-[12px] leading-4 text-[#111]">
      <TitleBar />
      <Toolbars />
      <main className="flex min-h-0 flex-1 gap-[6px]">
        <div className="flex w-[369px] shrink-0 flex-col gap-[6px] pb-1">
          <Outline />
          <Details />
        </div>
        <div className="flex min-w-0 flex-1 flex-col pb-1 pr-px">
          <View3D />
          <ViewTabs />
          <div className="flex h-[195px] shrink-0 gap-[7px] pt-[7px]">
            <GraphPanel />
            <TabularPanel />
          </div>
        </div>
      </main>
      <StatusBar />
    </div>
  );
}
